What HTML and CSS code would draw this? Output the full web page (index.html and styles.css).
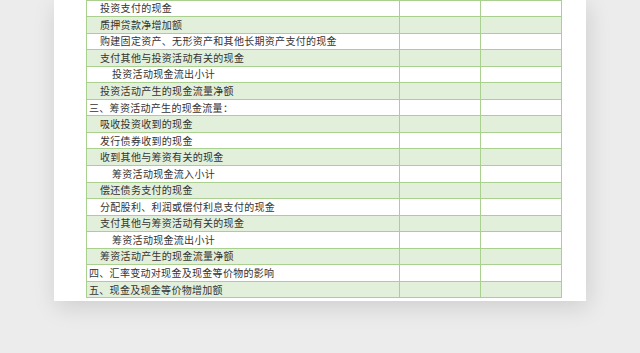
FILE: index.html
```html
<!DOCTYPE html>
<html lang="zh">
<head>
<meta charset="utf-8">
<link rel="stylesheet" href="styles.css">
</head>
<body>
<div class="stage">
  <div class="paper">
    <table class="sheet">
      <colgroup><col class="c1"><col class="c2"><col class="c3"></colgroup>
      <tbody>
        <tr><td class="item">投资支付的现金</td><td></td><td></td></tr>
        <tr class="alt"><td class="item">质押贷款净增加额</td><td></td><td></td></tr>
        <tr><td class="item">购建固定资产、无形资产和其他长期资产支付的现金</td><td></td><td></td></tr>
        <tr class="alt"><td class="item">支付其他与投资活动有关的现金</td><td></td><td></td></tr>
        <tr><td class="sub">投资活动现金流出小计</td><td></td><td></td></tr>
        <tr class="alt"><td class="item">投资活动产生的现金流量净额</td><td></td><td></td></tr>
        <tr><td class="head">三、筹资活动产生的现金流量：</td><td></td><td></td></tr>
        <tr class="alt"><td class="item">吸收投资收到的现金</td><td></td><td></td></tr>
        <tr><td class="item">发行债券收到的现金</td><td></td><td></td></tr>
        <tr class="alt"><td class="item">收到其他与筹资有关的现金</td><td></td><td></td></tr>
        <tr><td class="sub">筹资活动现金流入小计</td><td></td><td></td></tr>
        <tr class="alt"><td class="item">偿还债务支付的现金</td><td></td><td></td></tr>
        <tr><td class="item">分配股利、利润或偿付利息支付的现金</td><td></td><td></td></tr>
        <tr class="alt"><td class="item">支付其他与筹资活动有关的现金</td><td></td><td></td></tr>
        <tr><td class="sub">筹资活动现金流出小计</td><td></td><td></td></tr>
        <tr class="alt"><td class="item">筹资活动产生的现金流量净额</td><td></td><td></td></tr>
        <tr><td class="head">四、汇率变动对现金及现金等价物的影响</td><td></td><td></td></tr>
        <tr class="alt"><td class="head">五、现金及现金等价物增加额</td><td></td><td></td></tr>
      </tbody>
    </table>
  </div>
</div>
</body>
</html>
```
FILE: styles.css
```css
html, body {
  margin: 0;
  padding: 0;
  background: #ececec;
  width: 640px;
  height: 353px;
  overflow: hidden;
}
.stage {
  padding-left: 54px;
}
.paper {
  width: 532px;
  height: 301px;
  background: #ffffff;
  box-shadow: 2px 6px 22px rgba(0, 0, 0, 0.13);
  padding-left: 32px;
  box-sizing: border-box;
  overflow: hidden;
}
.sheet {
  border-collapse: collapse;
  table-layout: fixed;
  width: 475px;
  margin-top: -0.5px;
  font-family: "Noto Sans CJK SC", "Noto Sans", sans-serif;
  font-size: 10px;
  letter-spacing: 0.3px;
  color: #333333;
}
.c1 { width: 313px; }
.c2 { width: 81px; }
.c3 { width: 81px; }
.sheet td {
  border: 1px solid #a9d08e;
  height: 16.55px;
  padding: 0;
  line-height: 14px;
  white-space: nowrap;
  box-sizing: border-box;
  vertical-align: middle;
}
.sheet tr.alt td {
  background: #e2efda;
}
.sheet td.item { padding-left: 13px; }
.sheet td.sub { padding-left: 25px; }
.sheet td.head { padding-left: 2px; }
```
